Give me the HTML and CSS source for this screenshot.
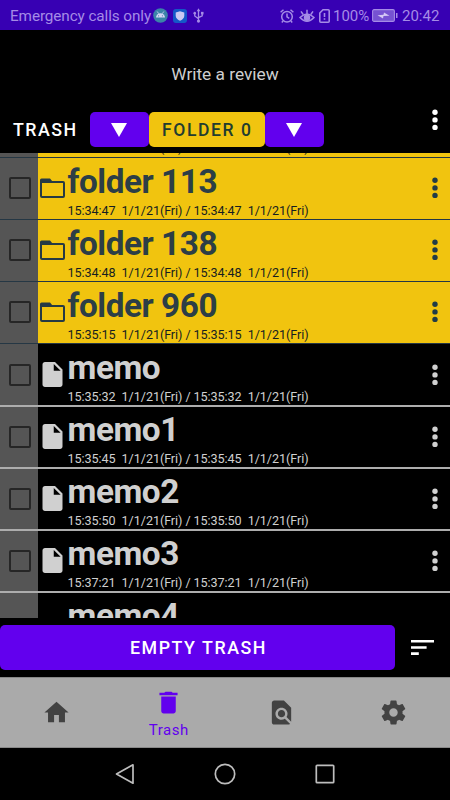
FILE: index.html
```html
<!DOCTYPE html>
<html lang="en">
<head>
<meta charset="utf-8">
<title>Trash</title>
<link rel="stylesheet" href="styles.css">
</head>
<body>
<svg width="0" height="0" class="defs">
  <symbol id="dots" viewBox="0 0 6 22"><circle cx="3" cy="3.300" r="2.700"/><circle cx="3" cy="10.900" r="2.700"/><circle cx="3" cy="18.400" r="2.700"/></symbol>
  <symbol id="folder" viewBox="0 0 25 20"><path d="M2 4h21q1 0 1 1v13q0 1-1 1H2q-1 0-1-1V5q0-1 1-1z" fill="none" stroke="#263a44" stroke-width="2"/><path d="M0 5V2Q0 .5 1.500.5H10l2.500 3V5z"/></symbol>
  <symbol id="file" viewBox="4 2 16 20"><path d="M6 2c-1.100 0-2 .9-2 2v16c0 1.100.9 2 2 2h12c1.100 0 2-.9 2-2V8l-6-6H6zm7 7V3.500L18.500 9H13z"/></symbol>
</svg>
<div class="screen">
  <div class="status">
    <span class="carrier">Emergency calls only</span>
    <svg class="s-android" viewBox="0 0 15 15"><circle cx="7.500" cy="7.500" r="7.300" fill="#3a83a8"/><path d="M3 9.500a4.500 4.300 0 0 1 9 0z" fill="#d4d4f6"/><path d="M4.200 3.500l1.500 2.200M10.800 3.500L9.300 5.700" stroke="#d4d4f6" stroke-width=".8"/><circle cx="5.600" cy="7.800" r=".6" fill="#3a83a8"/><circle cx="9.400" cy="7.800" r=".6" fill="#3a83a8"/></svg>
    <svg class="s-shield" viewBox="0 0 14 14"><rect width="14" height="14" rx="3" fill="#1458c8"/><path d="M7 2.300l4.300 1.300v3.200c0 2.400-2 4.100-4.300 5-2.300-.9-4.300-2.600-4.300-5V3.600z" fill="#cbc8f4"/></svg>
    <svg class="s-usb" viewBox="0 0 10 14" fill="none" stroke="#a58be6" stroke-width="1.200"><path d="M5 2v9.500M1.500 4.500v3L5 10M8.500 4.500v2.800L5 9"/><path d="M3.300 3L5 .3 6.700 3z" fill="#a58be6" stroke="none"/><circle cx="5" cy="12.200" r="1.500" fill="#a58be6" stroke="none"/><circle cx="1.500" cy="4.800" r="1.200" fill="#a58be6" stroke="none"/><path d="M7.300 3.600h2.400V6H7.300z" fill="#a58be6" stroke="none"/></svg>
    <span class="grow"></span>
    <svg class="s-alarm" viewBox="0 0 14 14" fill="none" stroke="#a58be6" stroke-width="1.500"><circle cx="7" cy="7.700" r="5.300"/><path d="M7 4.500v3.400l2.300 1.500M.6 3.300L3.500.8M13.400 3.300L10.500.8M3 12l-1.200 1.400M11 12l1.200 1.400"/></svg>
    <svg class="s-eye" viewBox="0 0 16 14" fill="none" stroke="#a58be6" stroke-width="1.500"><path d="M1 8.500Q8 1.800 15 8.500 8 16 1 8.500zM8 4.500V.7M4 5.200L2 2.400M12 5.200l2-2.800"/><circle cx="8" cy="8.700" r="2.500" fill="#a58be6"/></svg>
    <svg class="s-sim" viewBox="0 0 11 14" fill="none" stroke="#a58be6" stroke-width="1.600"><path d="M4 .8h5.200q1 0 1 1v10.400q0 1-1 1H1.800q-1 0-1-1V4zM5.500 4v4M5.500 9.300v1.500"/></svg>
    <span class="pct">100%</span>
    <svg class="s-batt" viewBox="0 0 26 13"><rect x=".6" y=".6" width="21.800" height="11.800" rx="1.500" fill="#7652d2" stroke="#a58be6" stroke-width="1.100"/><path d="M24 4h1.500v5H24z" fill="#a58be6"/><path d="M5.500 6.300l6-.5.500-2.300 5.500 3.200-6 .4-.5 2.400z" fill="#d5c8f5"/></svg>
    <span class="clock">20:42</span>
  </div>
  <div class="review">Write a review</div>
  <div class="header">
    <span class="title">TRASH</span>
    <span class="btn arrow"><svg viewBox="0 0 16 14"><path d="M0 0h16L8 14z"/></svg></span>
    <span class="btn current">FOLDER 0</span>
    <span class="btn arrow"><svg viewBox="0 0 16 14"><path d="M0 0h16L8 14z"/></svg></span>
    <svg class="dots"><use href="#dots"/></svg>
  </div>
  <div class="list">
    <div class="row folder peek"><div class="side"></div><div class="main"><div class="text"><small>15:34:46&nbsp; 1/1/21(Fri) / 15:34:46&nbsp; 1/1/21(Fri)</small></div></div></div>
    <div class="row folder"><div class="side"><i></i></div><div class="main"><svg class="ico"><use href="#folder"/></svg><div class="text"><b>folder 113</b><small>15:34:47&nbsp; 1/1/21(Fri) / 15:34:47&nbsp; 1/1/21(Fri)</small></div><svg class="dots"><use href="#dots"/></svg></div></div>
    <div class="row folder"><div class="side"><i></i></div><div class="main"><svg class="ico"><use href="#folder"/></svg><div class="text"><b>folder 138</b><small>15:34:48&nbsp; 1/1/21(Fri) / 15:34:48&nbsp; 1/1/21(Fri)</small></div><svg class="dots"><use href="#dots"/></svg></div></div>
    <div class="row folder"><div class="side"><i></i></div><div class="main"><svg class="ico"><use href="#folder"/></svg><div class="text"><b>folder 960</b><small>15:35:15&nbsp; 1/1/21(Fri) / 15:35:15&nbsp; 1/1/21(Fri)</small></div><svg class="dots"><use href="#dots"/></svg></div></div>
    <div class="row memo first"><div class="side"><i></i></div><div class="main"><svg class="ico"><use href="#file"/></svg><div class="text"><b>memo</b><small>15:35:32&nbsp; 1/1/21(Fri) / 15:35:32&nbsp; 1/1/21(Fri)</small></div><svg class="dots"><use href="#dots"/></svg></div></div>
    <div class="row memo"><div class="side"><i></i></div><div class="main"><svg class="ico"><use href="#file"/></svg><div class="text"><b>memo1</b><small>15:35:45&nbsp; 1/1/21(Fri) / 15:35:45&nbsp; 1/1/21(Fri)</small></div><svg class="dots"><use href="#dots"/></svg></div></div>
    <div class="row memo"><div class="side"><i></i></div><div class="main"><svg class="ico"><use href="#file"/></svg><div class="text"><b>memo2</b><small>15:35:50&nbsp; 1/1/21(Fri) / 15:35:50&nbsp; 1/1/21(Fri)</small></div><svg class="dots"><use href="#dots"/></svg></div></div>
    <div class="row memo"><div class="side"><i></i></div><div class="main"><svg class="ico"><use href="#file"/></svg><div class="text"><b>memo3</b><small>15:37:21&nbsp; 1/1/21(Fri) / 15:37:21&nbsp; 1/1/21(Fri)</small></div><svg class="dots"><use href="#dots"/></svg></div></div>
    <div class="row memo"><div class="side"></div><div class="main"><div class="text"><b>memo4</b></div></div></div>
  </div>
  <div class="actions">
    <span class="empty">EMPTY TRASH</span>
    <svg class="sort" viewBox="0 0 23 15"><path d="M0 0h23v2.600H0zM0 6.200h15.600v2.600H0zM0 12.300h7.800v2.600H0z"/></svg>
  </div>
  <div class="tabs">
    <div class="tab"><svg viewBox="0 0 24 24"><path d="M10 20v-6h4v6h5v-8h3L12 3 2 12h3v8z"/></svg></div>
    <div class="tab active"><svg viewBox="0 0 24 24"><path d="M6 19c0 1.100.9 2 2 2h8c1.100 0 2-.9 2-2V7H6v12zM19.500 4h-4l-1-1h-5l-1 1h-4v2h15V4z"/></svg><span>Trash</span></div>
    <div class="tab"><svg viewBox="0 0 24 24"><path d="M20 19.590V8l-6-6H6c-1.100 0-1.990.9-1.990 2L4 20c0 1.100.89 2 1.990 2H18c.45 0 .85-.15 1.190-.4l-4.430-4.430c-.8.52-1.740.83-2.760.83-2.760 0-5-2.240-5-5s2.240-5 5-5 5 2.240 5 5c0 1.020-.31 1.960-.83 2.750L20 19.590zM9 13c0 1.660 1.340 3 3 3s3-1.340 3-3-1.340-3-3-3-3 1.340-3 3z"/></svg></div>
    <div class="tab"><svg viewBox="0 0 24 24"><path d="M19.430 12.980c.04-.32.07-.64.07-.98s-.03-.66-.07-.98l2.110-1.650c.19-.15.24-.42.12-.64l-2-3.460c-.12-.22-.39-.3-.61-.22l-2.490 1c-.52-.4-1.080-.73-1.690-.98l-.38-2.650C14.460 2.180 14.250 2 14 2h-4c-.25 0-.46.18-.49.42l-.38 2.650c-.61.25-1.170.59-1.690.98l-2.490-1c-.23-.09-.49 0-.61.22l-2 3.460c-.13.22-.07.49.12.64l2.110 1.650c-.04.32-.07.65-.07.98s.03.66.07.98l-2.110 1.650c-.19.15-.24.42-.12.64l2 3.460c.12.22.39.3.61.22l2.490-1c.52.4 1.080.73 1.690.98l.38 2.650c.03.24.24.42.49.42h4c.25 0 .46-.18.49-.42l.38-2.650c.61-.25 1.170-.59 1.690-.98l2.490 1c.23.09.49 0 .61-.22l2-3.460c.12-.22.07-.49-.12-.64l-2.110-1.650zM12 15.500c-1.930 0-3.500-1.570-3.500-3.500s1.570-3.500 3.500-3.500 3.500 1.570 3.500 3.500-1.570 3.500-3.500 3.500z"/></svg></div>
  </div>
  <div class="sysnav">
    <svg viewBox="0 0 20 22"><path d="M18 1.800v18.400L1.500 11z"/></svg>
    <svg viewBox="0 0 22 22"><circle cx="11" cy="11" r="9.700"/></svg>
    <svg viewBox="0 0 20 22"><rect x="1.300" y="2.300" width="17.400" height="17.400" rx=".8"/></svg>
  </div>
</div>
</body>
</html>
```
FILE: styles.css
```css
* { box-sizing: border-box; }
body { margin: 0; background: #000; font-family: Roboto, sans-serif; }
.defs { position: absolute; }
svg { display: block; flex: none; }
.screen { width: 450px; height: 800px; display: flex; flex-direction: column; overflow: hidden; white-space: nowrap; }

.status { height: 30px; flex: none; background: #3700b3; color: #a58be6; display: flex; align-items: center; padding: 1px 10px 0; font-size: 15px; }
.carrier { width: 143px; font-size: 15.300px; letter-spacing: -.1px; }
.grow { flex: 1; }
.s-android { width: 15px; height: 15px; }
.s-shield { width: 14px; height: 14px; margin-left: 5px; }
.s-usb { width: 11px; height: 15px; margin-left: 6px; }
.s-alarm { width: 14px; height: 14px; margin-right: 5px; }
.s-eye { width: 16px; height: 14px; margin-right: 4px; }
.s-sim { width: 11px; height: 14px; margin-right: 3px; }
.pct { width: 39px; }
.s-batt { width: 26px; height: 13px; }
.clock { width: 38px; margin-left: 4px; }

.review { height: 78px; flex: none; padding-top: 33px; line-height: 22px; text-align: center; font-size: 17.300px; color: #cfcfcf; }
.header { height: 45px; flex: none; display: flex; align-items: flex-start; padding-top: 4px; color: #fff; }
.title { width: 89.500px; padding-left: 13px; font-size: 17.800px; font-weight: 500; letter-spacing: 1.500px; line-height: 36px; }
.btn { height: 34.500px; border-radius: 5px; display: flex; align-items: center; justify-content: center; }
.arrow { width: 59.300px; background: #6200ee; }
.arrow svg { width: 16px; height: 14px; margin-top: 2px; fill: #fff; }
.current { width: 116px; background: #f1c40f; color: #213c30; font-size: 17.500px; font-weight: 500; letter-spacing: 1.600px; padding: 2px 0 0 1px; }
.dots { width: 6px; height: 22px; }
.header .dots { margin: -3px 12px 0 auto; fill: #fff; }

.list { height: 465px; flex: none; overflow: hidden; display: flex; flex-direction: column; }
.row { height: 62px; flex: none; display: flex; border-bottom: 1px solid #253744; }
.peek { margin-top: -57px; }
.side { width: 37.500px; background: #555; display: flex; align-items: flex-end; padding: 0 0 20px 9px; }
.side i { width: 22px; height: 22px; border: 2px solid #262626; border-radius: 2px; }
.memo .side { padding-bottom: 19.500px; }
.main { flex: 1; display: flex; align-items: flex-end; background: #f1c40f; color: #2c3e46; }
.ico { width: 25px; height: 20px; margin: 0 0 21px 2.500px; fill: #263a44; }
.text { height: 60px; width: 320px; margin-left: 2.500px; display: flex; flex-direction: column; }
.peek .text, .memo .text:first-child { margin-left: 30px; }
.text b { font-size: 33.300px; line-height: 40px; height: 40px; margin-top: 3px; letter-spacing: -.45px; }
.text small { font-size: 12.600px; line-height: 15px; margin-top: 1px; letter-spacing: -.07px; color: #161e20; }
.peek small { margin-top: 43px; }
.main .dots { margin: 0 12px 20px auto; fill: #213c46; }
.memo { border-bottom: 2px solid #adadad; }
.memo.first { height: 63px; }
.memo .main { background: #000; color: #d0d0d0; }
.memo small { color: #d0d0d0; }
.memo .ico { width: 21px; height: 25px; margin: 0 2px 18px 4.500px; fill: #d0d0d0; }
.memo .dots { fill: #d0d0d0; margin-bottom: 19.500px; }

.actions { height: 59px; flex: none; padding-top: 7px; display: flex; }
.empty { width: 395px; height: 45px; border-radius: 5px; background: #6200ee; color: #fff; text-align: center; padding-left: 2px; line-height: 46px; font-size: 17.800px; font-weight: 500; letter-spacing: 1.550px; }
.sort { width: 23px; height: 15px; margin: 15px 0 0 16px; fill: #fff; }
.tabs { height: 71px; flex: none; background: #aaa; display: grid; grid-template-columns: repeat(4, 1fr); border-top: 1px solid #888; border-bottom: 1px solid #888; }
.tab { display: flex; flex-direction: column; align-items: center; padding-top: 20px; }
.tab svg { width: 29px; height: 29px; fill: #424242; }
.active { padding-top: 10px; color: #6200ee; font-size: 15px; letter-spacing: .5px; }
.active svg { fill: #6200ee; }
.active span { line-height: 18px; margin-top: 4px; }
.sysnav { height: 52px; flex: none; display: flex; justify-content: center; align-items: center; gap: 79px; }
.sysnav svg { width: 20px; height: 22px; fill: none; stroke: #bdbdbd; stroke-width: 1.700; stroke-linejoin: round; }
.sysnav svg:nth-child(2) { width: 22px; }
```
